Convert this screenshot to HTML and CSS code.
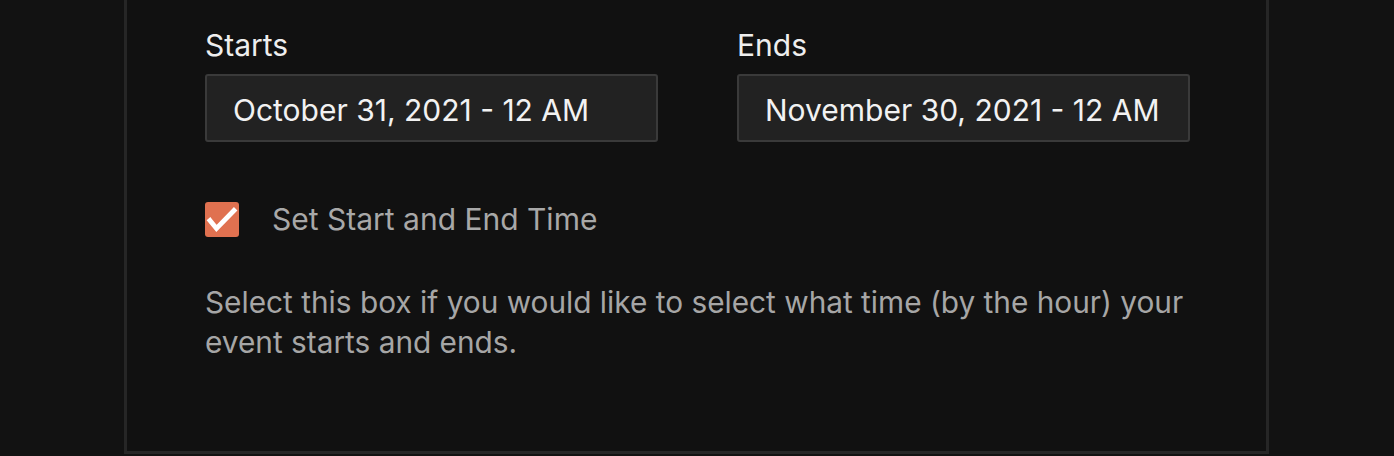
FILE: index.html
```html
<!DOCTYPE html>
<html>
<head>
  <meta charset="UTF-8">
  <title>Event Dates</title>
  <link rel="stylesheet" href="styles.css">
</head>
<body>
  <div class="panel">
    <div class="dates">
      <div class="field">
        <label for="starts">Starts</label>
        <input type="text" id="starts" value="October 31, 2021 - 12 AM" readonly>
      </div>
      <div class="field">
        <label for="ends">Ends</label>
        <input type="text" id="ends" value="November 30, 2021 - 12 AM" readonly>
      </div>
    </div>

    <label class="check-row">
      <span class="checkbox">
        <svg viewBox="0 0 34 34" width="34" height="34">
          <path d="M5 18.5 L11.5 26.5 L29 8.5" fill="none" stroke="#fff" stroke-width="4.8" stroke-linecap="square" stroke-linejoin="miter"/>
        </svg>
      </span>
      <span class="check-label">Set Start and End Time</span>
    </label>

    <p class="hint">Select this box if you would like to select what time (by the hour) your event starts and ends.</p>
  </div>
</body>
</html>
```

FILE: styles.css
```css
/* Corpo da página */
body {
  font-family: Inter, "Noto Sans", sans-serif;
  background-color: #121212;
  margin: 0;
  padding: 0;
}

/* Painel */
.panel {
  width: 985px;
  margin-left: 124px;
  padding: 27px 76px 89px 78px;
  background-color: #111;
  border: 3px solid #262626;
  border-top: none;
}

.dates {
  display: flex;
  gap: 79px;
}

.field {
  flex: 1;
}

.field label {
  display: block;
  font-size: 30px;
  line-height: 36px;
  color: #eee;
  margin-bottom: 11px;
}

.field input {
  display: block;
  box-sizing: border-box;
  width: 100%;
  height: 68px;
  padding: 3px 26px 0;
  border: 2px solid #3a3a3a;
  border-radius: 3px;
  background-color: #222;
  color: #f2f2f2;
  font-family: inherit;
  font-size: 30px;
  outline: none;
}

/* Checkbox */
.check-row {
  display: flex;
  align-items: center;
  gap: 33px;
  margin-top: 59px;
}

.checkbox {
  width: 34px;
  height: 35px;
  border-radius: 3px;
  background-color: #e07150;
  display: flex;
}

.check-label {
  font-size: 30px;
  color: #a8a8a8;
}

.hint {
  margin: 45px 0 0;
  font-size: 29.8px;
  line-height: 40px;
  color: #a6a6a6;
}
```
